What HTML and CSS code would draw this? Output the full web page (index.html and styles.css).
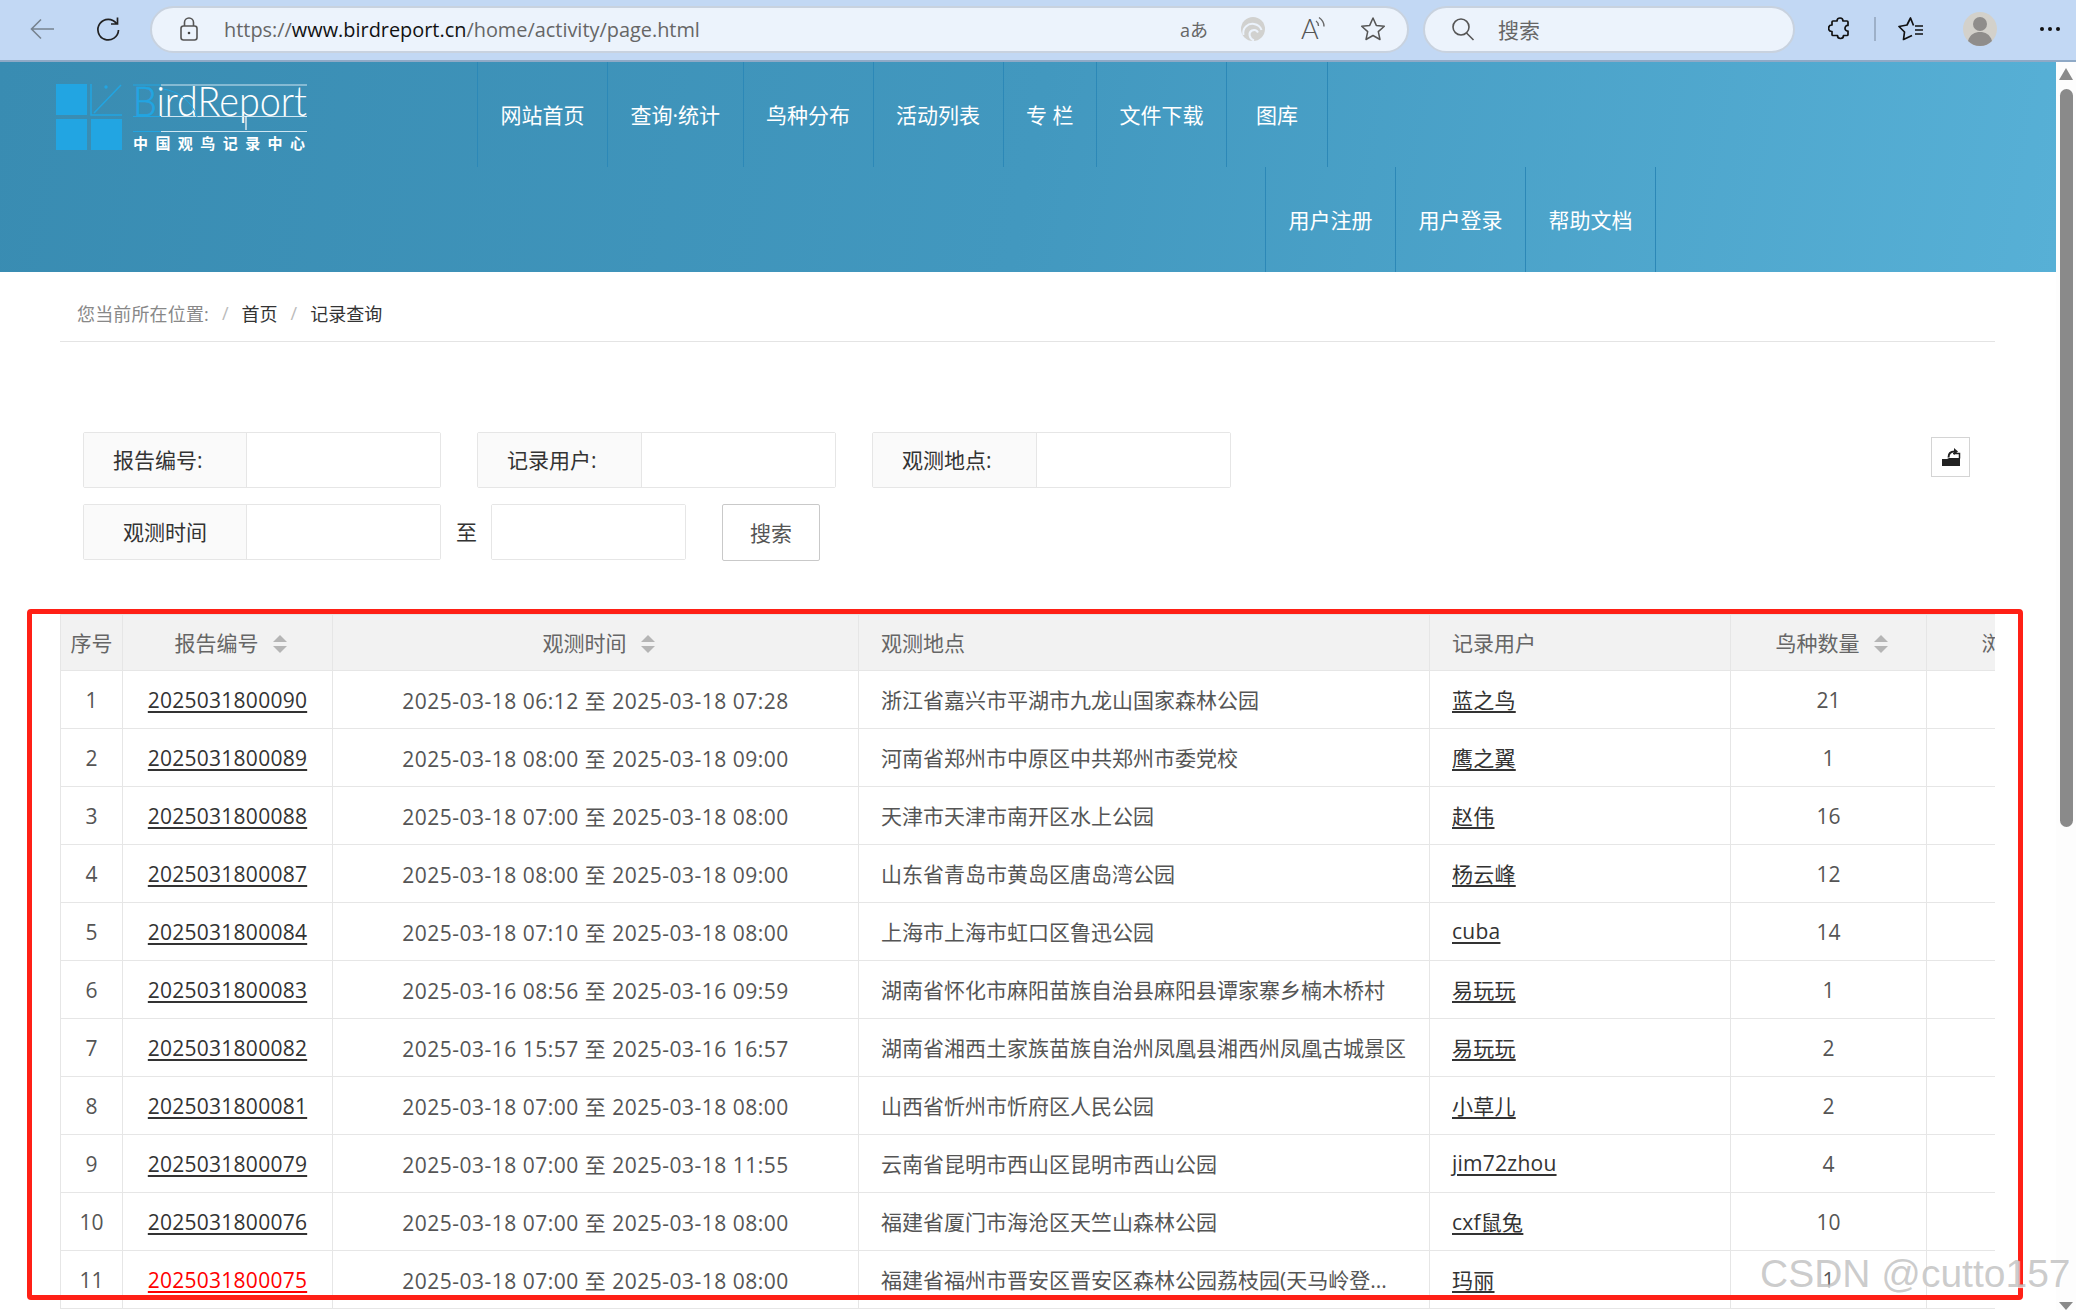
FILE: index.html
```html
<!DOCTYPE html>
<html lang="zh-CN">
<head>
    <meta charset="UTF-8">
    <title>记录查询</title>
    <link rel="stylesheet" href="styles.css">
</head>
<body>

    <div class="browser-bar">
        <svg class="ic ic-back" width="24" height="22" viewBox="0 0 24 22"><path d="M24 11H2M11 1.500 1.500 11l9.500 9.500" fill="none" stroke="#77838f" stroke-width="1.600"/></svg>
        <svg class="ic ic-reload" width="26" height="26" viewBox="0 0 26 26"><path d="M21.500 7.500A10.300 10.300 0 1 0 23.500 14M22.500 1.500v6.500H16" fill="none" stroke="#222" stroke-width="1.700"/></svg>
        <div class="address-bar">
            <svg class="ic ic-lock" width="20" height="26" viewBox="0 0 20 26"><path d="M5.500 10V6.500a4.500 4.500 0 0 1 9 0V10" fill="none" stroke="#555" stroke-width="1.600"/><rect x="2" y="10" width="16" height="14" rx="2.500" fill="none" stroke="#555" stroke-width="1.600"/><circle cx="10" cy="17" r="1.300" fill="#444"/></svg>
            <div class="url"><span class="url-dim">https://</span>www.birdreport.cn<span class="url-dim">/home/activity/page.html</span></div>
            <span class="translate-ic">aあ</span>
            <svg class="ic ic-swirl" width="26" height="26" viewBox="0 0 26 26"><circle cx="13" cy="13" r="12" fill="#d1d1cf"/><path d="M3.500 19C2 12 8 7 14 8c4 .7 6.500 3 7.500 6" fill="none" stroke="#ecf3fc" stroke-width="2"/><path d="M14 24.500c-5-2-6-8-2-10 2.500-1.200 5 0 6 2" fill="none" stroke="#ecf3fc" stroke-width="2"/></svg>
            <svg class="ic ic-read" width="26" height="26" viewBox="0 0 26 26"><text x="0" y="23" class="read-a">A</text><path d="M15 5c1.500 1 2.500 2.500 2.500 5M18 1.500c3 2 5 5 5 9" fill="none" stroke="#666" stroke-width="1.400"/></svg>
            <svg class="ic ic-star" width="26" height="26" viewBox="0 0 26 26"><path d="m13 2 3.300 7.400 8 .8-6 5.400 1.700 7.900-7-4-7 4 1.700-7.900-6-5.400 8-.8z" fill="none" stroke="#555" stroke-width="1.500" stroke-linejoin="round"/></svg>
        </div>
        <div class="search-bar">
            <svg class="ic" width="24" height="24" viewBox="0 0 24 24"><circle cx="10" cy="10" r="8" fill="none" stroke="#555" stroke-width="1.600"/><path d="m15.500 16 7 7" stroke="#555" stroke-width="1.600"/></svg>
            <span class="search-text">搜索</span>
        </div>
        <svg class="ic ic-puzzle" width="24" height="26" viewBox="0 0 24 26"><path d="M9 5c0-4 6-4 6 0h4q1 0 1 1v3.500c-4-.5-4 6 0 5.500v3.500q0 1-1 1h-3.500c0 4-6 4-6 0H5q-1 0-1-1v-3c-4.500 0-4.500-6.500 0-6.500V6q0-1 1-1z" fill="none" stroke="#111" stroke-width="1.700" stroke-linejoin="round"/></svg>
        <div class="bar-divider"></div>
        <svg class="ic ic-fav" width="26" height="26" viewBox="0 0 26 26"><path d="M15.500 9.500 12.500 2 9 9l-8 1.500 5.500 5.500-1 7.500 8.500-4" fill="none" stroke="#111" stroke-width="1.700" stroke-linejoin="round"/><path d="M17 10h8M17 14h8M17 18h8" stroke="#111" stroke-width="1.700"/></svg>
        <svg class="ic ic-avatar" width="34" height="34" viewBox="0 0 34 34"><circle cx="17" cy="17" r="17" fill="#d3d1cb"/><circle cx="17" cy="12" r="7" fill="#8f8d8b"/><path d="M5 29c2-7 7-9 12-9s10 2 12 9c-3 3-7 5-12 5s-9-2-12-5z" fill="#8f8d8b"/></svg>
        <div class="more-dots"><i></i><i></i><i></i></div>
    </div>

    <div class="page">
        <div class="content">
            <div class="site-header">
                <svg class="logo" width="252" height="68" viewBox="0 0 252 68">
                    <rect x="0" y="0" width="31" height="31" fill="#22a5e2"/>
                    <rect x="0" y="35" width="31" height="31" fill="#22a5e2"/>
                    <rect x="35" y="35" width="31" height="31" fill="#22a5e2"/>
                    <path d="M35 0v31h31M38 29 65 1" fill="none" stroke="#22a5e2" stroke-width="1.500"/>
                    <circle cx="50" cy="3" r="1.700" fill="#22a5e2"/>
                    <text x="77" y="32" class="logo-en" textLength="174" lengthAdjust="spacingAndGlyphs"><tspan class="logo-b">B</tspan>irdReport</text>
                    <path d="M105 1h146M105 32.500h146M105 47.500h146" stroke="#cfe6f2" stroke-width="1.200"/>
                    <path d="M77 1h28M77 32.500h28M77 47.500h28" stroke="#22a5e2" stroke-width="1.200"/>
                    <path d="M107 5c15 2 29 12 34 28" fill="none" stroke="#22a5e2" stroke-width="1"/>
                    <path d="M190 32v14" stroke="#fff" stroke-width="1.200"/>
                    <text x="77" y="65" class="logo-cn" textLength="172">中国观鸟记录中心</text>
                </svg>
                <div class="nav">
                    <div class="nav-row">
                        <a class="nav-item">网站首页</a>
                        <a class="nav-item">查询·统计</a>
                        <a class="nav-item">鸟种分布</a>
                        <a class="nav-item">活动列表</a>
                        <a class="nav-item">专 栏</a>
                        <a class="nav-item">文件下载</a>
                        <a class="nav-item nav-item-wide">图库</a>
                    </div>
                    <div class="nav-row nav-row-end">
                        <a class="nav-item">用户注册</a>
                        <a class="nav-item">用户登录</a>
                        <a class="nav-item">帮助文档</a>
                    </div>
                </div>
            </div>

            <div class="main">
                <div class="breadcrumb">
                    <span class="crumb-dim">您当前所在位置:</span><span class="crumb-sep">/</span><span>首页</span><span class="crumb-sep">/</span><span>记录查询</span>
                </div>

                <div class="search-form">
                    <div class="form-row">
                        <div class="input-group">
                            <div class="input-label">报告编号:</div>
                            <div class="input-box"></div>
                        </div>
                        <div class="input-group input-group-wide">
                            <div class="input-label">记录用户:</div>
                            <div class="input-box"></div>
                        </div>
                        <div class="input-group input-group-wide">
                            <div class="input-label">观测地点:</div>
                            <div class="input-box"></div>
                        </div>
                        <div class="export-btn">
                            <svg width="20" height="20" viewBox="0 0 20 20"><path d="M1 12h5l2-1h11v8H1z" fill="#222"/><path d="M12 6.500h6.500v5" fill="none" stroke="#222" stroke-width="1.500"/><path d="M7.500 10.500c0-4 2-6 6-6" fill="none" stroke="#222" stroke-width="2"/><path d="m13 1 4 3.500L13 8z" fill="#222"/></svg>
                        </div>
                    </div>
                    <div class="form-row">
                        <div class="input-group">
                            <div class="input-label input-label-center">观测时间</div>
                            <div class="input-box"></div>
                        </div>
                        <span class="range-to">至</span>
                        <div class="input-group input-group-single">
                            <div class="input-box"></div>
                        </div>
                        <div class="search-btn">搜索</div>
                    </div>
                </div>

                <div class="table-wrap">
                    <table class="record-table">
                        <colgroup>
                            <col class="col-no"><col class="col-id"><col class="col-time"><col class="col-place"><col class="col-user"><col class="col-count"><col class="col-view">
                        </colgroup>
                        <thead>
                            <tr>
                                <th class="center">序号</th>
                                <th class="center">报告编号<span class="sort"></span></th>
                                <th class="center">观测时间<span class="sort"></span></th>
                                <th>观测地点</th>
                                <th>记录用户</th>
                                <th class="center">鸟种数量<span class="sort"></span></th>
                                <th class="center">浏览次数</th>
                            </tr>
                        </thead>
                        <tbody>
                            <tr><td class="center">1</td><td class="center"><a>2025031800090</a></td><td class="center time">2025-03-18 06:12 至 2025-03-18 07:28</td><td>浙江省嘉兴市平湖市九龙山国家森林公园</td><td><a>蓝之鸟</a></td><td class="center">21</td><td></td></tr>
                            <tr><td class="center">2</td><td class="center"><a>2025031800089</a></td><td class="center time">2025-03-18 08:00 至 2025-03-18 09:00</td><td>河南省郑州市中原区中共郑州市委党校</td><td><a>鹰之翼</a></td><td class="center">1</td><td></td></tr>
                            <tr><td class="center">3</td><td class="center"><a>2025031800088</a></td><td class="center time">2025-03-18 07:00 至 2025-03-18 08:00</td><td>天津市天津市南开区水上公园</td><td><a>赵伟</a></td><td class="center">16</td><td></td></tr>
                            <tr><td class="center">4</td><td class="center"><a>2025031800087</a></td><td class="center time">2025-03-18 08:00 至 2025-03-18 09:00</td><td>山东省青岛市黄岛区唐岛湾公园</td><td><a>杨云峰</a></td><td class="center">12</td><td></td></tr>
                            <tr><td class="center">5</td><td class="center"><a>2025031800084</a></td><td class="center time">2025-03-18 07:10 至 2025-03-18 08:00</td><td>上海市上海市虹口区鲁迅公园</td><td><a>cuba</a></td><td class="center">14</td><td></td></tr>
                            <tr><td class="center">6</td><td class="center"><a>2025031800083</a></td><td class="center time">2025-03-16 08:56 至 2025-03-16 09:59</td><td>湖南省怀化市麻阳苗族自治县麻阳县谭家寨乡楠木桥村</td><td><a>易玩玩</a></td><td class="center">1</td><td></td></tr>
                            <tr><td class="center">7</td><td class="center"><a>2025031800082</a></td><td class="center time">2025-03-16 15:57 至 2025-03-16 16:57</td><td>湖南省湘西土家族苗族自治州凤凰县湘西州凤凰古城景区</td><td><a>易玩玩</a></td><td class="center">2</td><td></td></tr>
                            <tr><td class="center">8</td><td class="center"><a>2025031800081</a></td><td class="center time">2025-03-18 07:00 至 2025-03-18 08:00</td><td>山西省忻州市忻府区人民公园</td><td><a>小草儿</a></td><td class="center">2</td><td></td></tr>
                            <tr><td class="center">9</td><td class="center"><a>2025031800079</a></td><td class="center time">2025-03-18 07:00 至 2025-03-18 11:55</td><td>云南省昆明市西山区昆明市西山公园</td><td><a>jim72zhou</a></td><td class="center">4</td><td></td></tr>
                            <tr><td class="center">10</td><td class="center"><a>2025031800076</a></td><td class="center time">2025-03-18 07:00 至 2025-03-18 08:00</td><td>福建省厦门市海沧区天竺山森林公园</td><td><a>cxf鼠兔</a></td><td class="center">10</td><td></td></tr>
                            <tr><td class="center">11</td><td class="center"><a class="link-red">2025031800075</a></td><td class="center time">2025-03-18 07:00 至 2025-03-18 08:00</td><td>福建省福州市晋安区晋安区森林公园荔枝园(天马岭登...</td><td><a>玛丽</a></td><td class="center">1</td><td></td></tr>
                        </tbody>
                    </table>
                </div>
            </div>
        </div>

        <div class="scrollbar">
            <div class="scroll-up"></div>
            <div class="scroll-thumb"></div>
            <div class="scroll-down"></div>
        </div>
    </div>

    <div class="red-mark"></div>
    <div class="watermark">CSDN @cutto157</div>

</body>
</html>
```

FILE: styles.css
```css
* {
    box-sizing: border-box;
}
html, body {
    height: 100%;
}
body {
    margin: 0;
    height: 1310px;
    overflow: hidden;
    position: relative;
    font-family: "Open Sans", "Noto Sans CJK SC", sans-serif;
    font-size: 21px;
    color: #555;
    background-color: #fff;
}
.ic {
    display: block;
    flex: none;
}

/* browser toolbar */
.browser-bar {
    display: flex;
    align-items: center;
    height: 62px;
    padding: 0 0 2px 30px;
    background-color: #c2d8f4;
    border-bottom: 2px solid #8fa9c6;
}
.ic-reload {
    margin-left: 41px;
}
.address-bar {
    display: flex;
    align-items: center;
    flex: none;
    width: 1259px;
    height: 47px;
    margin-left: 29px;
    padding: 0 21px 0 27px;
    background-color: #ecf3fc;
    border: 2px solid #c8d2df;
    border-radius: 24px;
}
.url {
    margin-left: 25px;
    flex: 1;
    font-size: 19.900px;
    color: #111;
}
.url-dim {
    color: #666;
}
.translate-ic {
    font-size: 18px;
    color: #666;
    width: 27px;
    white-space: nowrap;
}
.ic-swirl {
    margin-left: 33px;
}
.ic-read {
    margin-left: 35px;
}
.read-a {
    font-family: "Lato", sans-serif;
    font-weight: 300;
    font-size: 27px;
    fill: #555;
}
.ic-star {
    margin-left: 33px;
}
.search-bar {
    display: flex;
    align-items: center;
    flex: none;
    width: 372px;
    height: 47px;
    margin-left: 14px;
    padding-left: 26px;
    background-color: #ecf3fc;
    border: 2px solid #c8d2df;
    border-radius: 24px;
}
.search-text {
    margin-left: 23px;
    color: #666;
}
.ic-puzzle {
    margin-left: 33px;
}
.bar-divider {
    flex: none;
    width: 2px;
    height: 24px;
    margin-left: 22px;
    background-color: #9db0c8;
}
.ic-fav {
    margin-left: 22px;
}
.ic-avatar {
    margin-left: 39px;
}
.more-dots {
    display: flex;
    gap: 4px;
    margin-left: 43px;
}
.more-dots i {
    width: 4px;
    height: 4px;
    border-radius: 50%;
    background-color: #111;
}

/* page + scrollbar */
.page {
    display: flex;
    height: 1248px;
}
.content {
    width: 2056px;
    flex: none;
}
.scrollbar {
    flex: 1;
    display: flex;
    flex-direction: column;
    align-items: center;
    background-color: #fdfdfd;
}
.scroll-up {
    margin-top: 6px;
    border-left: 7px solid transparent;
    border-right: 7px solid transparent;
    border-bottom: 12px solid #8a8a8a;
}
.scroll-thumb {
    width: 13px;
    height: 738px;
    margin-top: 9px;
    background-color: #8a8a8a;
    border-radius: 7px;
}
.scroll-down {
    margin-top: auto;
    border-left: 7px solid transparent;
    border-right: 7px solid transparent;
    border-top: 8px solid #8a8a8a;
}

/* site header */
.site-header {
    display: flex;
    height: 210px;
    background: linear-gradient(100deg, #398cb2 0%, #4298bf 50%, #57b0d6 100%);
}
.logo {
    flex: none;
    margin: 22px 0 0 56px;
}
.logo-en {
    font-family: "Lato", sans-serif;
    font-size: 41px;
    font-weight: 300;
    fill: #fff;
}
.logo-b {
    fill: #22a5e2;
    stroke: #22a5e2;
    stroke-width: 0.600px;
}
.logo-cn {
    font-family: "Noto Sans CJK SC", sans-serif;
    font-size: 15px;
    font-weight: 700;
    fill: #fff;
}
.nav {
    width: 1179px;
    margin-left: 169px;
}
.nav-row {
    display: flex;
    height: 105px;
}
.nav-row-end {
    justify-content: flex-end;
}
.nav-item {
    display: flex;
    align-items: center;
    justify-content: center;
    padding: 0 22.500px 2px;
    color: #fff;
    white-space: nowrap;
    border-left: 1px solid #2c88b7;
}
.nav-item:last-child {
    border-right: 1px solid #2c88b7;
}
.nav-item-wide {
    padding: 0 29px 2px;
}

/* breadcrumb */
.main {
    padding: 0 61px 0 60px;
}
.breadcrumb {
    display: flex;
    align-items: center;
    height: 70px;
    padding: 12px 0 0 17px;
    border-bottom: 1px solid #e4e4e4;
    font-size: 18px;
    color: #333;
}
.crumb-dim {
    color: #888;
    letter-spacing: 0.150px;
}
.crumb-sep {
    margin: 0 13px;
    color: #bbb;
}

/* search form */
.search-form {
    display: flex;
    flex-direction: column;
    gap: 16px;
    margin-top: 90px;
    padding-left: 23px;
}
.form-row {
    display: flex;
    align-items: flex-start;
    height: 56px;
    color: #333;
}
.input-group {
    display: flex;
    height: 56px;
    margin-right: 36px;
    border: 1px solid #e6e6e6;
    border-radius: 2px;
}
.input-label {
    width: 163px;
    padding-left: 29px;
    line-height: 54px;
    background-color: #fafafa;
    border-right: 1px solid #e6e6e6;
}
.input-group-wide .input-label {
    width: 164px;
}
.input-label-center {
    padding-left: 0;
    text-align: center;
}
.input-box {
    width: 193px;
    background-color: #fff;
}
.range-to {
    margin: 0 14px 0 -21px;
    line-height: 56px;
}
.search-btn {
    width: 98px;
    height: 57px;
    line-height: 57px;
    text-align: center;
    color: #555;
    border: 1px solid #c9c9c9;
    border-radius: 2px;
}
.export-btn {
    display: flex;
    align-items: center;
    justify-content: center;
    width: 39px;
    height: 40px;
    margin: 5px 25px 0 auto;
    border: 1px solid #d4d4d4;
}

/* table */
.table-wrap {
    margin-top: 54px;
    overflow: hidden;
}
.record-table {
    width: 2060px;
    table-layout: fixed;
    border-collapse: collapse;
}
.col-no { width: 62px; }
.col-id { width: 210px; }
.col-time { width: 526px; }
.col-place { width: 571px; }
.col-user { width: 301px; }
.col-count { width: 196px; }
.col-view { width: 194px; }
.record-table th,
.record-table td {
    height: 58px;
    padding: 0 22px 1px;
    text-align: left;
    font-weight: 400;
    white-space: nowrap;
    overflow: hidden;
    border: 1px solid #e6e6e6;
}
.record-table th {
    height: 56px;
    padding-bottom: 2px;
    background-color: #f2f2f2;
    color: #666;
}
.record-table th.center,
.record-table td.center {
    padding-left: 0;
    padding-right: 0;
    text-align: center;
}
.record-table td.center {
    padding-bottom: 0;
}
.record-table td.time {
    letter-spacing: 0.500px;
}
.record-table a {
    color: #333;
    letter-spacing: 0.250px;
    text-decoration: underline;
    text-decoration-thickness: 2px;
    text-underline-offset: 3px;
}
.record-table a.link-red {
    color: #f00;
}
.sort {
    display: inline-block;
    position: relative;
    width: 15px;
    height: 18px;
    margin: 0 -7px 0 14px;
    vertical-align: -2px;
}
.sort::before,
.sort::after {
    content: "";
    position: absolute;
    left: 0;
    border-left: 7px solid transparent;
    border-right: 7px solid transparent;
}
.sort::before {
    top: 0;
    border-bottom: 7px solid #b5b5b5;
}
.sort::after {
    bottom: 0;
    border-top: 7px solid #b5b5b5;
}

/* overlays on the screenshot */
.red-mark {
    position: absolute;
    left: 27px;
    top: 609px;
    width: 1996px;
    height: 691px;
    border: 5px solid #ff2016;
    border-radius: 4px;
}
.watermark {
    position: absolute;
    left: 1760px;
    top: 1252px;
    font-family: "Liberation Sans", sans-serif;
    font-size: 39px;
    color: rgba(170, 170, 170, 0.6);
    text-shadow: 1px 1px 1px rgba(255, 255, 255, 0.8);
    white-space: nowrap;
}
```
